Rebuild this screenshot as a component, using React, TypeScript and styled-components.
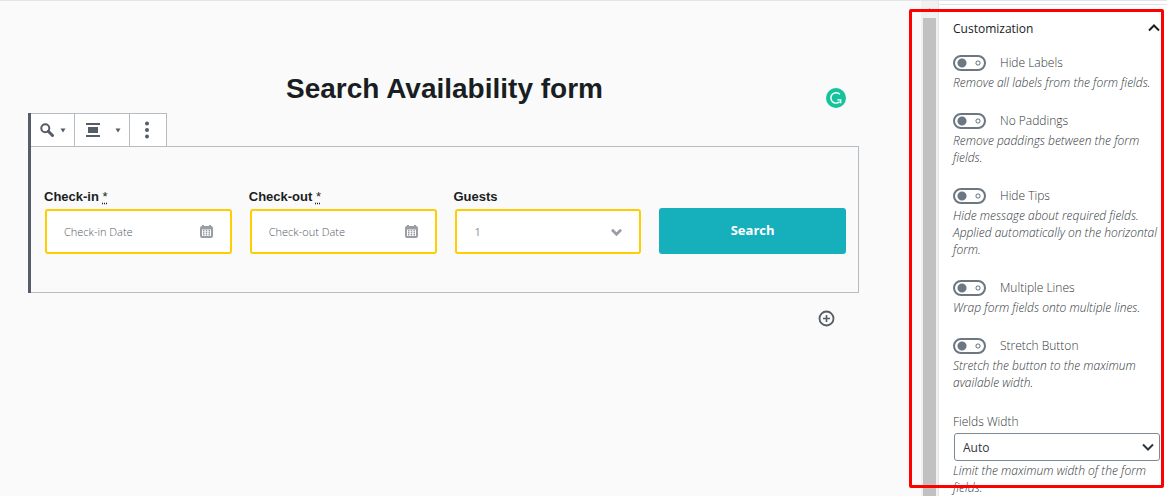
import React, { useId } from "react";
import styled, { createGlobalStyle } from "styled-components";

const Global = createGlobalStyle`
  *, *::before, *::after { box-sizing: border-box; }
  body { margin: 0; background: #fafafa; font-family: "Open Sans", "Noto Sans", sans-serif; overflow: hidden; }
  button, input, select { font: inherit; margin: 0; }
`;

const Page = styled.div`
  position: relative;
  display: flex;
  height: 100vh;
  border-top: 1px solid #e2e4e7;
  overflow: hidden;
`;

const Canvas = styled.main`
  flex: 1;
  min-width: 0;
  padding: 71px 62px 0 28px;
`;

const TitleRow = styled.div`
  position: relative;
  padding: 0 0 8px 2px;
`;

const Title = styled.h1`
  margin: 0;
  font: 700 28px/33px "Liberation Sans", Arial, sans-serif;
  color: #191e23;
  text-align: center;
`;

const Checker = styled.button`
  position: absolute;
  right: 13px;
  top: 16px;
  width: 20px;
  height: 20px;
  padding: 0;
  border: 0;
  background: none;
  svg { display: block; }
`;

const Block = styled.section`
  border-left: 3px solid #555d66;
`;

const Toolbar = styled.div`
  display: flex;
  width: max-content;
  height: 33px;
  border-top: 1px solid #b5bcc2;
  background: #fff;
`;

const ToolButton = styled.button<{ $width: number }>`
  display: flex;
  align-items: center;
  justify-content: space-between;
  width: ${(p) => p.$width}px;
  padding: 0 8px 0 9px;
  border: 0;
  border-right: 1px solid #b5bcc2;
  background: none;
  color: #555d66;
`;

const FormPanel = styled.form`
  display: grid;
  grid-template-columns: repeat(4, minmax(0, 1fr));
  align-items: end;
  gap: 18px;
  height: 147px;
  padding: 40px 12px 38px 14px;
  border: 1px solid #b5bcc2;
  border-left: 0;
`;

const Field = styled.div`
  display: flex;
  flex-direction: column;
`;

const Label = styled.label`
  margin-left: -1px;
  font: 700 13px/18px "Liberation Sans", Arial, sans-serif;
  color: #191e23;
  padding-bottom: 3px;
  abbr { font-weight: 400; text-decoration: underline dotted; text-underline-offset: 2px; }
`;

const Control = styled.div`
  display: flex;
  align-items: center;
  height: 45px;
  padding: 0 17px;
  border: 2px solid #ffce00;
  border-radius: 3px;
  background: #fff;
  color: #9a9da3;
  svg { flex: none; }
`;

const TextBox = styled.input`
  flex: 1;
  min-width: 0;
  padding: 0;
  border: 0;
  outline: 0;
  background: none;
  font-size: 11px;
  font-weight: 300;
  line-height: 16px;
  color: #555b66;
  &::placeholder { color: #555b66; opacity: 1; }
`;

const GuestSelect = styled.select`
  flex: 1;
  min-width: 0;
  padding: 0 0 0 1px;
  border: 0;
  appearance: none;
  background: none;
  font-size: 11px;
  line-height: 16px;
  color: #8d9096;
`;

const SearchButton = styled.button`
  height: 46px;
  padding: 0 0 2px;
  border: 0;
  border-radius: 3px;
  background: #16afbc;
  color: #fff;
  font-size: 13px;
  font-weight: 700;
`;

const InserterRow = styled.div`
  display: flex;
  justify-content: flex-end;
  padding: 17px 24px 0 0;
`;

const RoundButton = styled.button`
  padding: 0;
  border: 0;
  background: none;
  svg { display: block; }
`;

const ScrollTrack = styled.div`
  flex: none;
  display: flex;
  flex-direction: column;
  align-items: center;
  width: 18px;
  background: #f1f1f1;
  border-right: 1px solid #e2e4e7;
`;

const ScrollUp = styled.svg`
  flex: none;
  display: block;
  margin: 6px 0;
`;

const ScrollThumb = styled.div`
  flex: 1;
  width: 13px;
  background: #c1c1c1;
`;

const Sidebar = styled.aside`
  flex: none;
  width: 228px;
  padding-top: 3px;
  background: #fff;
`;

const PanelBody = styled.section`
  padding: 0 7px 0 14px;
  border-top: 1px solid #e2e4e7;
`;

const PanelToggle = styled.button`
  display: flex;
  align-items: center;
  justify-content: space-between;
  width: 100%;
  height: 46px;
  padding: 0;
  border: 0;
  background: none;
  font-size: 12px;
  font-weight: 500;
  color: #191e23;
`;

const Setting = styled.div`
  padding-bottom: 18px;
`;

const SwitchRow = styled.div`
  display: flex;
  align-items: center;
  gap: 14px;
  height: 23px;
`;

const Switch = styled.input`
  appearance: none;
  display: block;
  width: 33px;
  height: 16px;
  border: 2px solid #6c7781;
  border-radius: 8px;
  background:
    radial-gradient(circle at 7px 6px, #6c7781 4px, transparent 5px),
    radial-gradient(circle at 23px 6px, transparent 1px, #6c7781 2px, transparent 3px);
`;

const SettingLabel = styled.label`
  font-size: 12px;
  font-weight: 300;
  line-height: 20px;
  color: #32373c;
`;

const Help = styled.p`
  margin: 0;
  font-size: 12px;
  font-weight: 300;
  line-height: 17px;
  font-style: italic;
  color: #32373c;
`;

const SelectBox = styled.div`
  display: grid;
  align-items: center;
  height: 28px;
  margin: 1px 0 1px 1px;
  > * { grid-area: 1 / 1; }
  svg { justify-self: end; margin-right: 6px; pointer-events: none; color: #32373c; }
`;

const WidthSelect = styled.select`
  width: 100%;
  height: 28px;
  padding: 0 8px;
  appearance: none;
  border: 1px solid #7e8993;
  border-radius: 3px;
  background: #fff;
  font-size: 12px;
  color: #32373c;
`;

const Highlight = styled.div`
  position: absolute;
  top: 8px;
  right: 3px;
  bottom: 8px;
  width: 255px;
  border: 3px solid #ff0000;
  border-radius: 2px;
  pointer-events: none;
`;

const Caret = () => (
  <svg width="6" height="5" viewBox="0 0 6 5" aria-hidden="true">
    <path d="M0.5 0.5h5L3 4.5z" fill="currentColor" />
  </svg>
);

const Chevron = ({ up = false, width = 12, stroke = 2 }: { up?: boolean; width?: number; stroke?: number }) => (
  <svg width={width} height="8" viewBox="0 0 12 8" aria-hidden="true">
    <path d={up ? "M1 6.5 6 1.5l5 5" : "M1 1.5l5 5 5-5"} fill="none" stroke="currentColor" strokeWidth={stroke} />
  </svg>
);

const Calendar = () => (
  <svg width="13" height="13" viewBox="0 0 13 13" aria-hidden="true">
    <path
      fill="currentColor"
      fillRule="evenodd"
      d="M2 0h2v1h5V0h2v1a2 2 0 0 1 2 2v8a2 2 0 0 1-2 2H2a2 2 0 0 1-2-2V3a2 2 0 0 1 2-2zM2 4.500V11h9V4.500z"
    />
    <path
      fill="currentColor"
      d="M3 5h1.500v1.500H3zM5.750 5h1.500v1.500h-1.500zM8.500 5H10v1.500H8.500zM3 7h1.500v1.500H3zM5.750 7h1.500v1.500h-1.500zM8.500 7H10v1.500H8.500zM3 9h1.500v1.500H3zM5.750 9h1.500v1.500h-1.500zM8.500 9H10v1.500H8.500z"
    />
  </svg>
);

const DateField = ({ name }: { name: string }) => {
  const id = useId();
  return (
    <Field>
      <Label htmlFor={id}>
        {name} <abbr>*</abbr>
      </Label>
      <Control>
        <TextBox id={id} placeholder={`${name} Date`} />
        <Calendar />
      </Control>
    </Field>
  );
};

const ToggleSetting = ({ label, help }: { label: string; help: string }) => {
  const id = useId();
  return (
    <Setting>
      <SwitchRow>
        <Switch type="checkbox" role="switch" id={id} />
        <SettingLabel htmlFor={id}>{label}</SettingLabel>
      </SwitchRow>
      <Help>{help}</Help>
    </Setting>
  );
};

const settings = [
  { label: "Hide Labels", help: "Remove all labels from the form fields." },
  { label: "No Paddings", help: "Remove paddings between the form fields." },
  { label: "Hide Tips", help: "Hide message about required fields. Applied automatically on the horizontal form." },
  { label: "Multiple Lines", help: "Wrap form fields onto multiple lines." },
  { label: "Stretch Button", help: "Stretch the button to the maximum available width." },
];

export default function App() {
  return (
    <>
      <Global />
      <Page>
        <Canvas>
          <TitleRow>
            <Title>Search Availability form</Title>
            <Checker aria-label="Check writing">
              <svg width="20" height="20" viewBox="0 0 21 21" aria-hidden="true">
                <circle cx="10.500" cy="10.500" r="10.500" fill="#15c39a" />
                <path d="M14.600 6.600A5.500 5.500 0 1 0 14.300 14.500M11.800 12.500h3.600v3.500" fill="none" stroke="#fff" strokeWidth="1.500" />
              </svg>
            </Checker>
          </TitleRow>
          <Block>
            <Toolbar>
              <ToolButton $width={44} aria-label="Change block type">
                <svg width="14" height="14" viewBox="0 0 14 14" aria-hidden="true">
                  <circle cx="5.300" cy="5.300" r="4" fill="none" stroke="currentColor" strokeWidth="2" />
                  <path d="M8.300 8.300l4.200 4.200" stroke="currentColor" strokeWidth="3" strokeLinecap="round" />
                </svg>
                <Caret />
              </ToolButton>
              <ToolButton $width={55} aria-label="Change alignment">
                <svg width="18" height="14" viewBox="0 0 18 14" aria-hidden="true">
                  <path d="M2 0h14v2H2zM4 4h10v6H4zM2 12h14v2H2z" fill="currentColor" />
                </svg>
                <Caret />
              </ToolButton>
              <ToolButton $width={37} aria-label="More options">
                <svg width="16" height="18" viewBox="0 0 16 18" aria-hidden="true">
                  <g fill="currentColor">
                    <circle cx="8" cy="2.500" r="2" />
                    <circle cx="8" cy="9" r="2" />
                    <circle cx="8" cy="15.500" r="2" />
                  </g>
                </svg>
              </ToolButton>
            </Toolbar>
            <FormPanel onSubmit={(e) => e.preventDefault()}>
              <DateField name="Check-in" />
              <DateField name="Check-out" />
              <Field>
                <Label htmlFor="guests">Guests</Label>
                <Control>
                  <GuestSelect id="guests">
                    <option>1</option>
                  </GuestSelect>
                  <Chevron width={11} stroke={3} />
                </Control>
              </Field>
              <SearchButton>Search</SearchButton>
            </FormPanel>
          </Block>
          <InserterRow>
            <RoundButton aria-label="Add block">
              <svg width="17" height="17" viewBox="0 0 17 17" aria-hidden="true">
                <circle cx="8.500" cy="8.500" r="7" fill="none" stroke="#555d66" strokeWidth="1.800" />
                <path d="M8.500 5v7M5 8.500h7" stroke="#555d66" strokeWidth="1.600" />
              </svg>
            </RoundButton>
          </InserterRow>
        </Canvas>
        <ScrollTrack>
          <ScrollUp width="7" height="5" viewBox="0 0 7 5" aria-hidden="true">
            <path d="M3.500 1l2.500 3H1z" fill="#a3a3a3" />
          </ScrollUp>
          <ScrollThumb />
        </ScrollTrack>
        <Sidebar>
          <PanelBody>
            <PanelToggle aria-expanded="true">
              Customization
              <Chevron up />
            </PanelToggle>
            {settings.map((s) => (
              <ToggleSetting key={s.label} {...s} />
            ))}
            <SettingLabel htmlFor="width">Fields Width</SettingLabel>
            <SelectBox>
              <WidthSelect id="width">
                <option>Auto</option>
              </WidthSelect>
              <Chevron />
            </SelectBox>
            <Help>Limit the maximum width of the form fields.</Help>
          </PanelBody>
        </Sidebar>
        <Highlight />
      </Page>
    </>
  );
}
